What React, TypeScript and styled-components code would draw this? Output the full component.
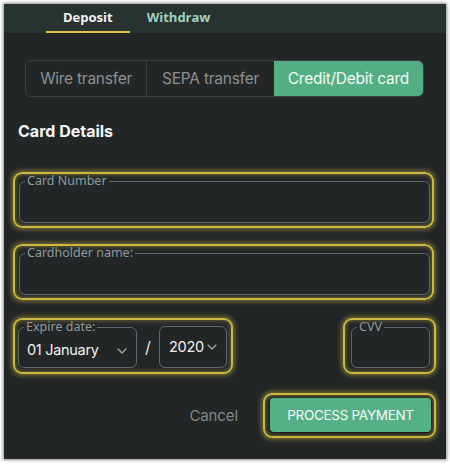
import React from "react";
import styled, { createGlobalStyle } from "styled-components";

const Global = createGlobalStyle`
  html, body { margin: 0; padding: 0; background: #ffffff; }
  * { box-sizing: border-box; }
`;

const Page = styled.div`
  padding: 4px 4px 5px 4px;
`;

const Panel = styled.div`
  height: 455px;
  background: #222627;
  box-shadow: 0 0 3px 1px rgba(0, 0, 0, 0.45);
  display: flex;
  flex-direction: column;
`;

const Header = styled.div`
  height: 30px;
  background: #283231;
  display: flex;
  align-items: stretch;
  padding-left: 42px;
  border-bottom: 1px solid #1e2424;
`;

const Tab = styled.div<{ $active?: boolean }>`
  padding: 0 17px;
  display: flex;
  align-items: center;
  padding-bottom: 2px;
  font-family: "Open Sans", "Noto Sans", sans-serif;
  font-weight: 700;
  font-size: 13px;
  color: ${(p) => (p.$active ? "#f2f2f2" : "#9fd2bf")};
  border-bottom: 2px solid ${(p) => (p.$active ? "#e3c04c" : "transparent")};
`;

const Body = styled.div`
  flex: 1;
  display: flex;
  flex-direction: column;
  padding: 0 12px 0 9px;
  font-family: Inter, "Liberation Sans", sans-serif;
`;

const Segmented = styled.div`
  margin: 26px 10px 0 12px;
  height: 37px;
  display: grid;
  grid-template-columns: 122fr 127fr 150fr;
  border: 1px solid #3a4042;
  border-radius: 6px;
  overflow: hidden;
`;

const Segment = styled.div<{ $active?: boolean; $divider?: boolean }>`
  display: flex;
  align-items: center;
  justify-content: center;
  font-size: 15.5px;
  letter-spacing: -0.25px;
  color: ${(p) => (p.$active ? "#f4f8f6" : "#8d9192")};
  background: ${(p) => (p.$active ? "#53ae85" : "transparent")};
  border-right: ${(p) => (p.$divider ? "1px solid #3a4042" : "none")};
`;

const Title = styled.div`
  margin: 24px 0 0 5px;
  font-size: 16px;
  line-height: 20px;
  font-weight: 700;
  color: #f6f6f6;
`;

const Glow = styled.div<{ $top?: number }>`
  margin-top: ${(p) => p.$top ?? 0}px;
  border: 2px solid #cbb944;
  border-radius: 9px;
  box-shadow: 0 0 4px 2px rgba(200, 182, 64, 0.45),
    inset 0 0 4px 1px rgba(200, 182, 64, 0.4);
  display: flex;
`;

const FieldGlow = styled(Glow)`
  height: 56px;
  padding: 0 2px 3px 4px;
`;

const Fieldset = styled.fieldset`
  flex: 1;
  min-width: 0;
  margin: 0;
  padding: 0 8px 0 5px;
  border: 1px solid #5c6869;
  border-radius: 6px;
`;

const Legend = styled.legend`
  padding: 0 2px;
  font-family: "Noto Sans", sans-serif;
  font-size: 12.5px;
  line-height: 14px;
  color: #909c9c;
`;

const Row = styled.div`
  margin-top: 18px;
  display: flex;
  justify-content: space-between;
  align-items: flex-start;
`;

const ExpireGlow = styled(Glow)`
  width: 220px;
  height: 56px;
  padding: 0 4px 4px 3px;
  align-items: stretch;
`;

const MonthField = styled.fieldset`
  width: 119px;
  margin: 0;
  padding: 0 9px 0 5px;
  border: 1px solid #5c6869;
  border-radius: 6px;
  display: flex;
  align-items: center;
  justify-content: space-between;
`;

const SelectText = styled.span`
  font-size: 14.5px;
  letter-spacing: -0.3px;
  color: #f2f2f2;
  padding-left: 3px;
  margin-top: -2px;
`;

const Slash = styled.div`
  width: 22px;
  display: flex;
  align-items: center;
  justify-content: center;
  padding-top: 6px;
  font-size: 16px;
  color: #e8e8e8;
`;

const YearBox = styled.div`
  margin-top: 6px;
  width: 68px;
  border: 1px solid #5c6869;
  border-radius: 6px;
  display: flex;
  align-items: center;
  justify-content: space-between;
  padding: 0 9px 0 6px;
`;

const CvvGlow = styled(Glow)`
  width: 93px;
  height: 56px;
  padding: 0 4px 4px 6px;
  margin-right: -2px;
`;

const Actions = styled.div`
  margin-top: 19px;
  display: flex;
  justify-content: flex-end;
  align-items: center;
  gap: 25px;
  margin-right: -2px;
`;

const Cancel = styled.div`
  font-size: 15px;
  color: #86898a;
  letter-spacing: -0.1px;
`;

const ButtonGlow = styled(Glow)`
  width: 173px;
  height: 45px;
  padding: 3px 3px 4px 5px;
`;

const PrimaryButton = styled.div`
  flex: 1;
  border-radius: 4px;
  background: #55b088;
  display: flex;
  align-items: center;
  justify-content: center;
  font-size: 13.5px;
  letter-spacing: -0.3px;
  color: #f6faf8;
  box-shadow: 0 1px 2px rgba(0, 0, 0, 0.4);
`;

const Chevron = () => (
  <svg width="10" height="6" viewBox="0 0 10 6" fill="none">
    <path d="M1 1l4 4 4-4" stroke="#a4aaab" strokeWidth="1.2" strokeLinecap="round" strokeLinejoin="round" />
  </svg>
);

export default function App() {
  return (
    <>
      <Global />
      <Page>
        <Panel>
          <Header>
            <Tab $active>Deposit</Tab>
            <Tab>Withdraw</Tab>
          </Header>
          <Body>
            <Segmented>
              <Segment $divider>Wire transfer</Segment>
              <Segment>SEPA transfer</Segment>
              <Segment $active>Credit/Debit card</Segment>
            </Segmented>
            <Title>Card Details</Title>
            <FieldGlow $top={31}>
              <Fieldset>
                <Legend>Card Number</Legend>
              </Fieldset>
            </FieldGlow>
            <FieldGlow $top={16}>
              <Fieldset>
                <Legend>Cardholder name:</Legend>
              </Fieldset>
            </FieldGlow>
            <Row>
              <ExpireGlow>
                <MonthField>
                  <Legend>Expire date:</Legend>
                  <SelectText>01 January</SelectText>
                  <Chevron />
                </MonthField>
                <Slash>/</Slash>
                <YearBox>
                  <SelectText>2020</SelectText>
                  <Chevron />
                </YearBox>
              </ExpireGlow>
              <CvvGlow>
                <Fieldset>
                  <Legend>CVV</Legend>
                </Fieldset>
              </CvvGlow>
            </Row>
            <Actions>
              <Cancel>Cancel</Cancel>
              <ButtonGlow>
                <PrimaryButton>PROCESS PAYMENT</PrimaryButton>
              </ButtonGlow>
            </Actions>
          </Body>
        </Panel>
      </Page>
    </>
  );
}
